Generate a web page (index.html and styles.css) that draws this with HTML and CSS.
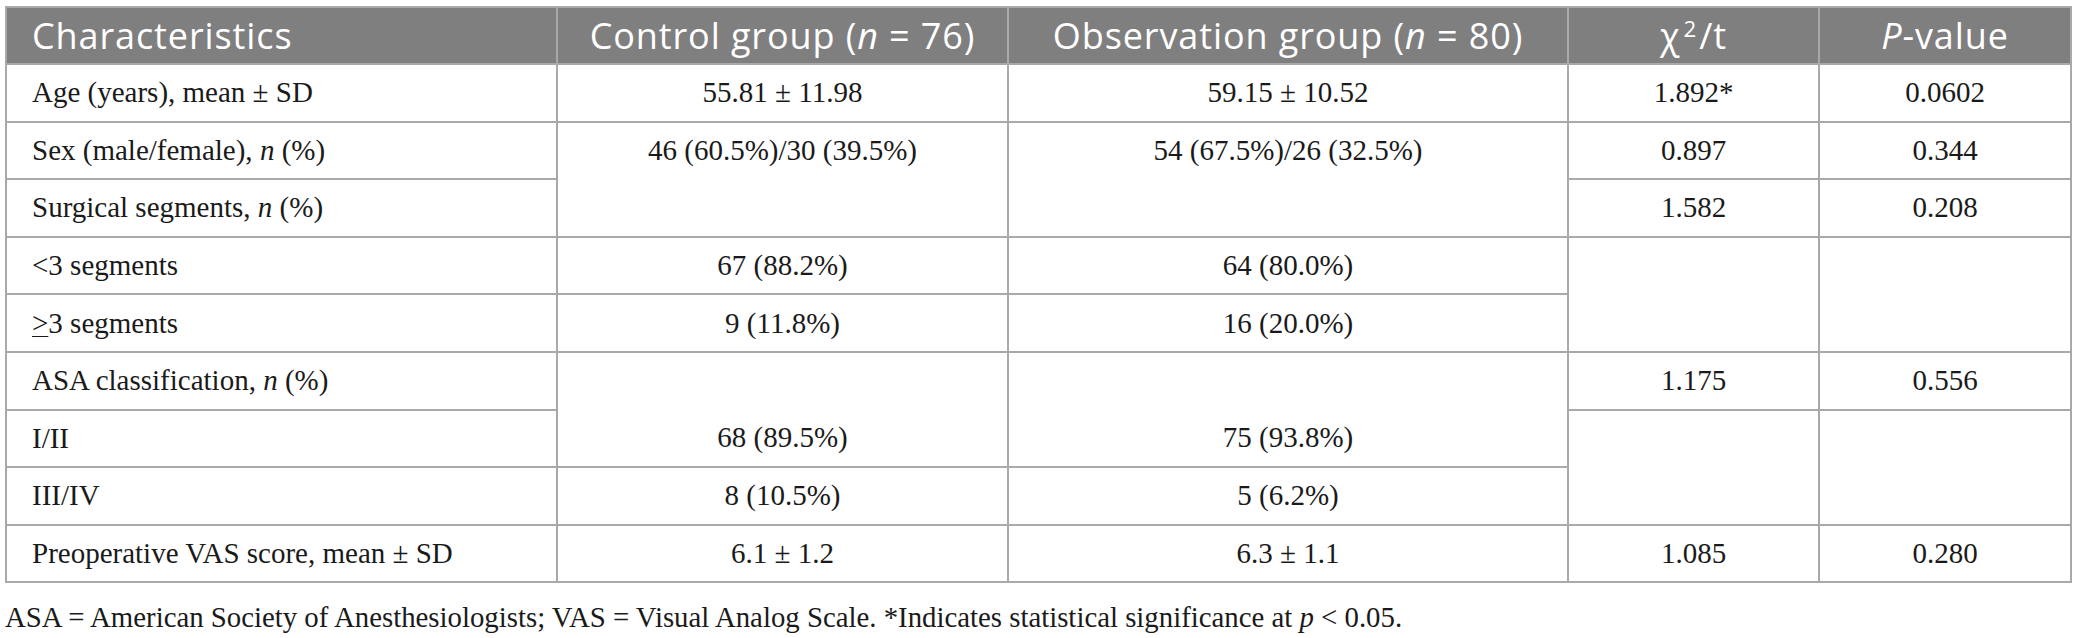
FILE: index.html
```html
<!DOCTYPE html>
<html lang="en">
<head>
<meta charset="utf-8">
<title>Table</title>
<link rel="stylesheet" href="styles.css">
</head>
<body>
<div class="page">
  <table class="data">
    <colgroup>
      <col class="c1"><col class="c2"><col class="c3"><col class="c4"><col class="c5">
    </colgroup>
    <thead>
      <tr>
        <th class="left">Characteristics</th>
        <th>Control group (<i>n</i> = 76)</th>
        <th>Observation group (<i>n</i> = 80)</th>
        <th>χ<sup>2</sup>/t</th>
        <th><i>P</i>-value</th>
      </tr>
    </thead>
    <tbody>
      <tr>
        <td class="left">Age (years), mean ± SD</td>
        <td>55.81 ± 11.98</td>
        <td>59.15 ± 10.52</td>
        <td>1.892*</td>
        <td>0.0602</td>
      </tr>
      <tr>
        <td class="left">Sex (male/female), <i>n</i> (%)</td>
        <td class="open-b">46 (60.5%)/30 (39.5%)</td>
        <td class="open-b">54 (67.5%)/26 (32.5%)</td>
        <td>0.897</td>
        <td>0.344</td>
      </tr>
      <tr>
        <td class="left">Surgical segments, <i>n</i> (%)</td>
        <td></td>
        <td></td>
        <td>1.582</td>
        <td>0.208</td>
      </tr>
      <tr>
        <td class="left">&lt;3 segments</td>
        <td>67 (88.2%)</td>
        <td>64 (80.0%)</td>
        <td class="open-b"></td>
        <td class="open-b"></td>
      </tr>
      <tr>
        <td class="left"><u>&gt;</u>3 segments</td>
        <td>9 (11.8%)</td>
        <td>16 (20.0%)</td>
        <td></td>
        <td></td>
      </tr>
      <tr>
        <td class="left">ASA classification, <i>n</i> (%)</td>
        <td class="open-b"></td>
        <td class="open-b"></td>
        <td>1.175</td>
        <td>0.556</td>
      </tr>
      <tr>
        <td class="left">I/II</td>
        <td>68 (89.5%)</td>
        <td>75 (93.8%)</td>
        <td class="open-b"></td>
        <td class="open-b"></td>
      </tr>
      <tr>
        <td class="left">III/IV</td>
        <td>8 (10.5%)</td>
        <td>5 (6.2%)</td>
        <td></td>
        <td></td>
      </tr>
      <tr>
        <td class="left">Preoperative VAS score, mean ± SD</td>
        <td>6.1 ± 1.2</td>
        <td>6.3 ± 1.1</td>
        <td>1.085</td>
        <td>0.280</td>
      </tr>
    </tbody>
  </table>
  <p class="note">ASA = American Society of Anesthesiologists; VAS = Visual Analog Scale. *Indicates statistical significance at <i>p</i> &lt; 0.05.</p>
</div>
</body>
</html>
```
FILE: styles.css
```css
html, body {
  margin: 0;
  padding: 0;
  background: #ffffff;
}

.page {
  padding: 6px 0 0 5px;
}

.data {
  border-collapse: collapse;
  table-layout: fixed;
  width: 2065px;
  border: 2px solid #a9a9a9;
}

.c1 { width: 551px; }
.c2 { width: 451px; }
.c3 { width: 560px; }
.c4 { width: 251px; }
.c5 { width: 252px; }

.data th {
  background: #7f7f7f;
  color: #ffffff;
  font-family: "Open Sans", "Noto Sans", sans-serif;
  font-weight: 400;
  font-size: 36px;
  letter-spacing: 0.9px;
  height: 55px;
  padding: 0 8px;
  text-align: center;
  vertical-align: middle;
  border: 2px solid #a9a9a9;
  white-space: nowrap;
}

.data th sup {
  font-size: 0.62em;
  vertical-align: 0.55em;
  line-height: 0;
  margin-left: 3px;
  margin-right: 2px;
}

.data td {
  font-family: "Liberation Serif", "Times New Roman", serif;
  font-size: 29px;
  color: #1a1a1a;
  height: 55.6px;
  padding: 0 10px;
  text-align: center;
  vertical-align: middle;
  border: 2px solid #a9a9a9;
  white-space: nowrap;
}

.data th.left,
.data td.left {
  text-align: left;
  padding-left: 25px;
}

.data td.open-b {
  border-bottom-style: hidden;
}

.data td u {
  text-decoration-thickness: 1px;
  text-underline-offset: 3px;
}

.note {
  margin: 18px 0 0 0;
  font-family: "Liberation Serif", "Times New Roman", serif;
  font-size: 28.8px;
  color: #1a1a1a;
}
```
